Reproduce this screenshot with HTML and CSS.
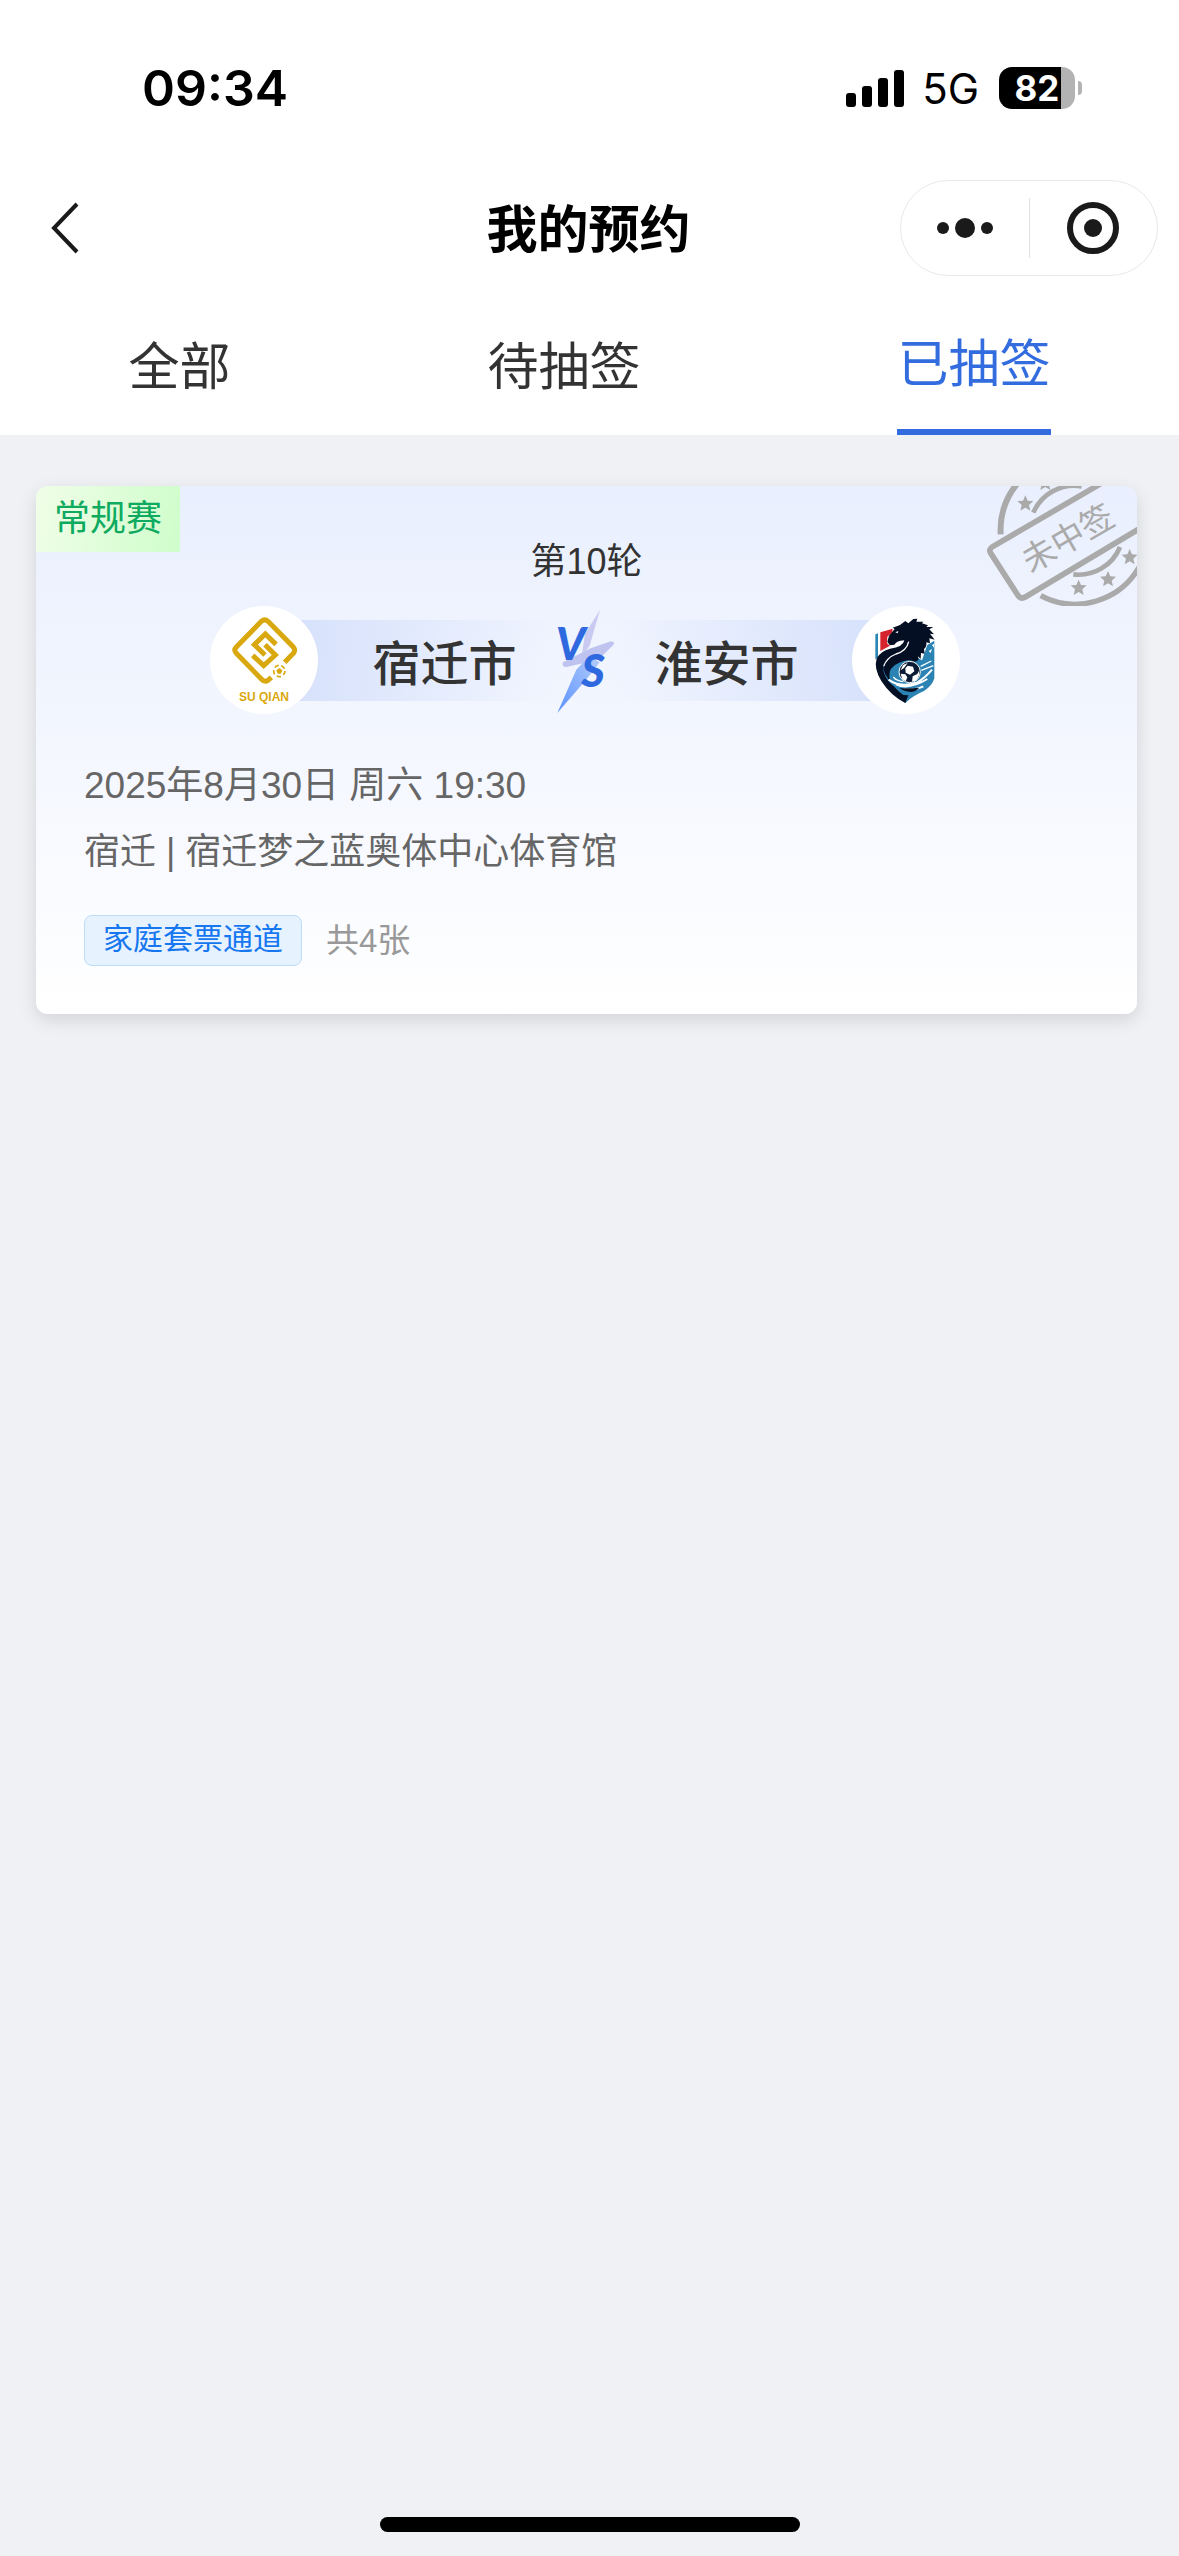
FILE: index.html
```html
<!DOCTYPE html>
<html lang="zh-CN">
<head>
    <meta charset="UTF-8">
    <meta name="viewport" content="width=device-width, initial-scale=1.0">
    <title>我的预约</title>
    <link rel="stylesheet" href="styles.css">
</head>
<body>
    <div class="page">
        <header class="header">
            <div class="status">
                <span class="status_time">09:34</span>
                <div class="status_right">
                    <svg class="signal" viewBox="0 0 58 37">
                        <rect x="0" y="23" width="10" height="14" rx="3"/>
                        <rect x="16" y="16" width="10" height="21" rx="3"/>
                        <rect x="32" y="8" width="10" height="29" rx="3"/>
                        <rect x="48" y="0" width="10" height="37" rx="3"/>
                    </svg>
                    <span class="network">5G</span>
                    <div class="battery"><span class="battery_level">82</span></div>
                </div>
            </div>
            <div class="nav">
                <button class="back" aria-label="返回">
                    <svg viewBox="0 0 28 52"><path d="M26 2L3 26l23 24"/></svg>
                </button>
                <h1 class="title">我的预约</h1>
                <div class="capsule">
                    <button aria-label="更多">
                        <svg viewBox="0 0 56 56"><circle cx="6" cy="28" r="6"/><circle cx="28" cy="28" r="10"/><circle cx="50" cy="28" r="6"/></svg>
                    </button>
                    <button aria-label="关闭">
                        <svg viewBox="0 0 56 56"><circle class="ring" cx="28" cy="28" r="23"/><circle cx="28" cy="28" r="9"/></svg>
                    </button>
                </div>
            </div>
            <nav class="tabs">
                <button class="tab">全部</button>
                <button class="tab">待抽签</button>
                <button class="tab active">已抽签</button>
            </nav>
        </header>

        <main class="list">
            <div class="card">
                <span class="badge">常规赛</span>
                <svg class="stamp" viewBox="51 33 450 360">
                    <g class="stamp_line">
                        <path d="M92 178A222 222 0 0 1 145 22" stroke-width="18"/>
                        <path d="M212 362A222 222 0 0 0 510 272" stroke-width="16"/>
                        <path d="M190 113A133 133 0 0 1 335 34"/>
                        <path d="M310 298A133 133 0 0 0 450 216"/>
                        <path d="M560-72L68 215Q54 223 63 236L143 360Q152 374 166 366L560 130" stroke-width="17"/>
                    </g>
                    <defs>
                        <path id="star" d="M0-25L7-9L24-8L11 4L15 21L0 12L-15 21L-11 4L-24-8L-7-9Z"/>
                    </defs>
                    <use href="#star" x="166" y="86"/>
                    <use href="#star" x="226" y="24"/>
                    <use href="#star" x="326" y="339"/>
                    <use href="#star" x="414" y="313"/>
                    <use href="#star" x="479" y="247"/>
                    <text x="294" y="225" transform="rotate(-30 294 190)">未中签</text>
                </svg>
                <p class="round">第10轮</p>
                <div class="match">
                    <div class="logo">
                        <svg viewBox="30 33 324 324">
                            <g class="gold_line">
                                <path d="M254 202L281 174Q287 165 280 156L204 79Q194 70 184 79L109 156Q100 165 109 175L184 252Q194 263 204 256L214 247"/>
                                <path d="M228 148L196 117L163 149L195 180"/>
                                <path d="M158 181L191 212L226 180L195 149"/>
                            </g>
                            <circle class="gold_ball" cx="238" cy="228" r="17"/>
                            <path class="gold" d="M238 219l9 7-4 10h-10l-4-10z"/>
                            <text class="gold" x="192" y="317">SU QIAN</text>
                        </svg>
                    </div>
                    <div class="name home">宿迁市</div>
                    <svg class="vs" viewBox="48 15 180 315">
                        <defs>
                            <linearGradient id="bolt" x1="0" y1="1" x2="1" y2="0">
                                <stop offset="0" stop-color="#5b93ff"/>
                                <stop offset="1" stop-color="#b4ccfa"/>
                            </linearGradient>
                        </defs>
                        <path fill="#c9caf2" d="M183 20L138 92L128 160L152 128Z"/>
                        <path fill="#bfc3f0" d="M72 178L155 136L216 115Q230 117 222 127L178 170L82 192Q68 192 72 178Z"/>
                        <path fill="url(#bolt)" d="M55 330L112 200L150 160L182 178L140 232Z"/>
                        <text x="50" y="171">V</text>
                        <text x="127" y="251">S</text>
                    </svg>
                    <div class="name away">淮安市</div>
                    <div class="logo">
                        <svg viewBox="36 33 324 324">
                            <path fill="#2a86b4" d="M106 118l8-3v72l-8 6z"/>
                            <path fill="#d6242f" d="M121 112l37-11-2 12-14 12-1 20 9 7-29 16z"/>
                            <path fill="#2b83b3" d="M262 150L283 137V250Q277 272 252 288Q218 302 196 324Q150 295 135 268Q124 232 140 208L200 170L246 196Z"/>
                            <path fill="#050f24" d="M232 71L229 80L250 80L246 85L264 91L259 96L280 96L268 103L282 118L270 116L284 134L268 130L270 145L259 142Q261 156 252 162L254 176L243 174L242 192L234 184Q240 200 222 200Q204 190 176 204Q146 216 148 246Q156 276 190 300L205 301L196 324Q152 302 124 258Q101 222 110 190Q122 168 150 161Q190 156 193 136L182 137Q170 138 163 149L150 151L142 141L147 122L164 102L158 98L180 90L196 78L205 85L220 72Z"/>
                            <path class="white_line" d="M206 140Q200 168 168 177Q140 188 131 214" stroke-width="4"/>
                            <path fill="#fff" d="M166 112l9-4-2 7zM276 150l6-4v12zM266 168l10-6-4 12z"/>
                            <path fill="#2b83b3" d="M130 204Q126 242 158 262Q182 274 188 290Q150 272 136 244Q126 222 130 204Z"/>
                            <circle fill="#0c1b35" class="ball_line" cx="209" cy="231" r="32"/>
                            <path fill="#fff" d="M203 212l16 3 4 14-13 10-13-6-1-13zM182 236l14 2 6 9-5 12-10-6zM218 244l14-7 5-10 1 12-8 17-14 4zM182 226l7-16 14-6-11 15z"/>
                            <path class="white_line" d="M146 254Q180 280 232 262Q256 248 276 224M168 268Q206 286 262 252M190 282Q226 286 250 274" stroke-width="6"/>
                            <path class="white_line" d="M242 214L274 198M244 226L280 212M160 246Q170 258 190 260" stroke-width="4"/>
                            <path fill="#050f24" d="M178 280Q204 296 226 288L238 278L218 280Z"/>
                        </svg>
                    </div>
                </div>
                <div class="info">
                    <p class="date">2025年8月30日 周六 19:30</p>
                    <p>宿迁 | 宿迁梦之蓝奥体中心体育馆</p>
                </div>
                <div class="ticket">
                    <span class="channel">家庭套票通道</span>
                    <span class="count">共4张</span>
                </div>
            </div>
        </main>
        <div class="home_bar"></div>
    </div>
</body>
</html>
```
FILE: styles.css
```css
* {
    margin: 0;
    padding: 0;
    box-sizing: border-box;
}
body {
    font-family: "Liberation Sans", "Noto Sans CJK SC", sans-serif;
    color: #333;
}
button {
    border: none;
    background: none;
    font-family: inherit;
    color: inherit;
    cursor: pointer;
}
svg {
    display: block;
}
.page {
    display: flex;
    flex-direction: column;
    min-height: 100vh;
    background-color: #f0f1f5;
}
.header {
    background-color: #fff;
}
.status {
    display: flex;
    justify-content: space-between;
    align-items: center;
    padding: 61px 98px 44px 142px;
    height: 159px;
    font-family: Inter, sans-serif;
    color: #000;
}
.status_time {
    font-size: 50px;
    font-weight: 600;
}
.status_right {
    display: flex;
    align-items: center;
}
.signal {
    width: 58px;
    height: 37px;
}
.network {
    margin: 0 20px 0 18px;
    font-size: 42px;
}
.battery {
    position: relative;
    width: 76px;
    height: 42px;
    margin-right: 6px;
    border-radius: 13px;
    background: linear-gradient(90deg, #000 82%, #b3b3b3 82%);
    text-align: center;
}
.battery::after {
    content: "";
    position: absolute;
    top: 14px;
    right: -7px;
    width: 4px;
    height: 14px;
    border-radius: 0 4px 4px 0;
    background-color: #b3b3b3;
}
.battery_level {
    color: #fff;
    font-size: 35px;
    font-weight: 700;
    line-height: 42px;
}
.nav {
    display: grid;
    grid-template-columns: 1fr auto 1fr;
    align-items: center;
    height: 138px;
    padding: 0 21px 0 51px;
}
.back {
    width: 28px;
    height: 52px;
}
.back path {
    fill: none;
    stroke: #1a1a1a;
    stroke-width: 4;
}
.title {
    padding-top: 6px;
    font-size: 51px;
    font-weight: 700;
    line-height: 72px;
    color: #000;
    /* keeps the title centred between the uneven side paddings */
    margin-right: 32px;
}
.capsule {
    display: flex;
    align-items: center;
    justify-self: end;
    width: 258px;
    height: 96px;
    border: 1px solid #e8e8e8;
    border-radius: 48px;
}
.capsule button {
    display: flex;
    flex: 1;
    align-items: center;
    justify-content: center;
    height: 60px;
}
.capsule button + button {
    border-left: 1px solid #e2e2e2;
}
.capsule svg {
    width: 56px;
    height: 56px;
    fill: #1a1a1a;
}
.capsule .ring {
    fill: none;
    stroke: #1a1a1a;
    stroke-width: 6;
}
.tabs {
    display: flex;
    justify-content: space-around;
    height: 138px;
}
.tab {
    padding-bottom: 6px;
    font-size: 51px;
}
.tab.active {
    color: #326cde;
    border-bottom: 6px solid #326cde;
}
.list {
    padding: 51px 42px 51px 36px;
}
.card {
    position: relative;
    overflow: hidden;
    padding: 48px;
    border-radius: 12px;
    background: linear-gradient(180deg, #e9effe, #fff);
    box-shadow: 0 6px 18px rgba(0, 0, 0, 0.12);
}
.badge {
    position: absolute;
    top: 0;
    left: 0;
    padding: 0 18px;
    line-height: 66px;
    font-size: 36px;
    color: #0eaa60;
    background: linear-gradient(100deg, #f0fee8, #cffdcb);
}
.stamp {
    position: absolute;
    top: 0;
    right: 0;
    width: 150px;
    height: 120px;
    fill: #aaa;
}
.stamp text {
    font-size: 100px;
    text-anchor: middle;
}
.stamp_line {
    fill: none;
    stroke: #aaa;
    stroke-width: 14;
}
.round {
    padding-top: 2px;
    font-size: 36px;
    line-height: 51px;
    text-align: center;
}
.match {
    display: flex;
    justify-content: center;
    align-items: center;
    margin: 19px 4px 39px 0;
}
.logo {
    flex: none;
    z-index: 1;
    width: 108px;
    height: 108px;
    border-radius: 50%;
    background-color: #fff;
}
.logo text {
    font-size: 36px;
    font-weight: 700;
    text-anchor: middle;
}
.gold {
    fill: #d9a80e;
}
.gold_line {
    fill: none;
    stroke: #d9a80e;
    stroke-width: 15;
}
.gold_ball {
    fill: none;
    stroke: #d9a80e;
    stroke-width: 5;
    stroke-dasharray: 13 8;
}
.white_line {
    fill: none;
    stroke: #fff;
}
.ball_line {
    stroke: #fff;
    stroke-width: 3;
}
.name {
    width: 277px;
    padding-top: 9px;
    font-size: 48px;
    font-weight: 500;
    line-height: 72px;
}
.home {
    margin-left: -40px;
    padding-left: 95px;
    background: linear-gradient(90deg, #d5e0fb, rgba(213, 224, 251, 0));
}
.away {
    margin-right: -40px;
    padding-right: 93px;
    text-align: right;
    background: linear-gradient(270deg, #d5e0fb, rgba(213, 224, 251, 0));
}
.vs {
    flex: none;
    width: 60px;
    height: 105px;
}
.vs text {
    font-family: Lato, sans-serif;
    font-size: 136px;
    font-style: italic;
    font-weight: 900;
    fill: #2f69e0;
}
.info {
    font-size: 36px;
    line-height: 66px;
    color: #666;
}
.date {
    font-size: 37px;
}
.ticket {
    display: flex;
    align-items: center;
    gap: 24px;
    margin-top: 30px;
}
.channel {
    padding: 0 18px 4px;
    border: 1px solid #bcdcf8;
    border-radius: 8px;
    font-size: 30px;
    line-height: 45px;
    color: #1677f0;
    background-color: #e6f2fe;
}
.count {
    font-size: 33px;
    line-height: 48px;
    color: #999;
}
.home_bar {
    width: 420px;
    height: 15px;
    margin: auto auto 24px;
    border-radius: 8px;
    background-color: #000;
}
```
